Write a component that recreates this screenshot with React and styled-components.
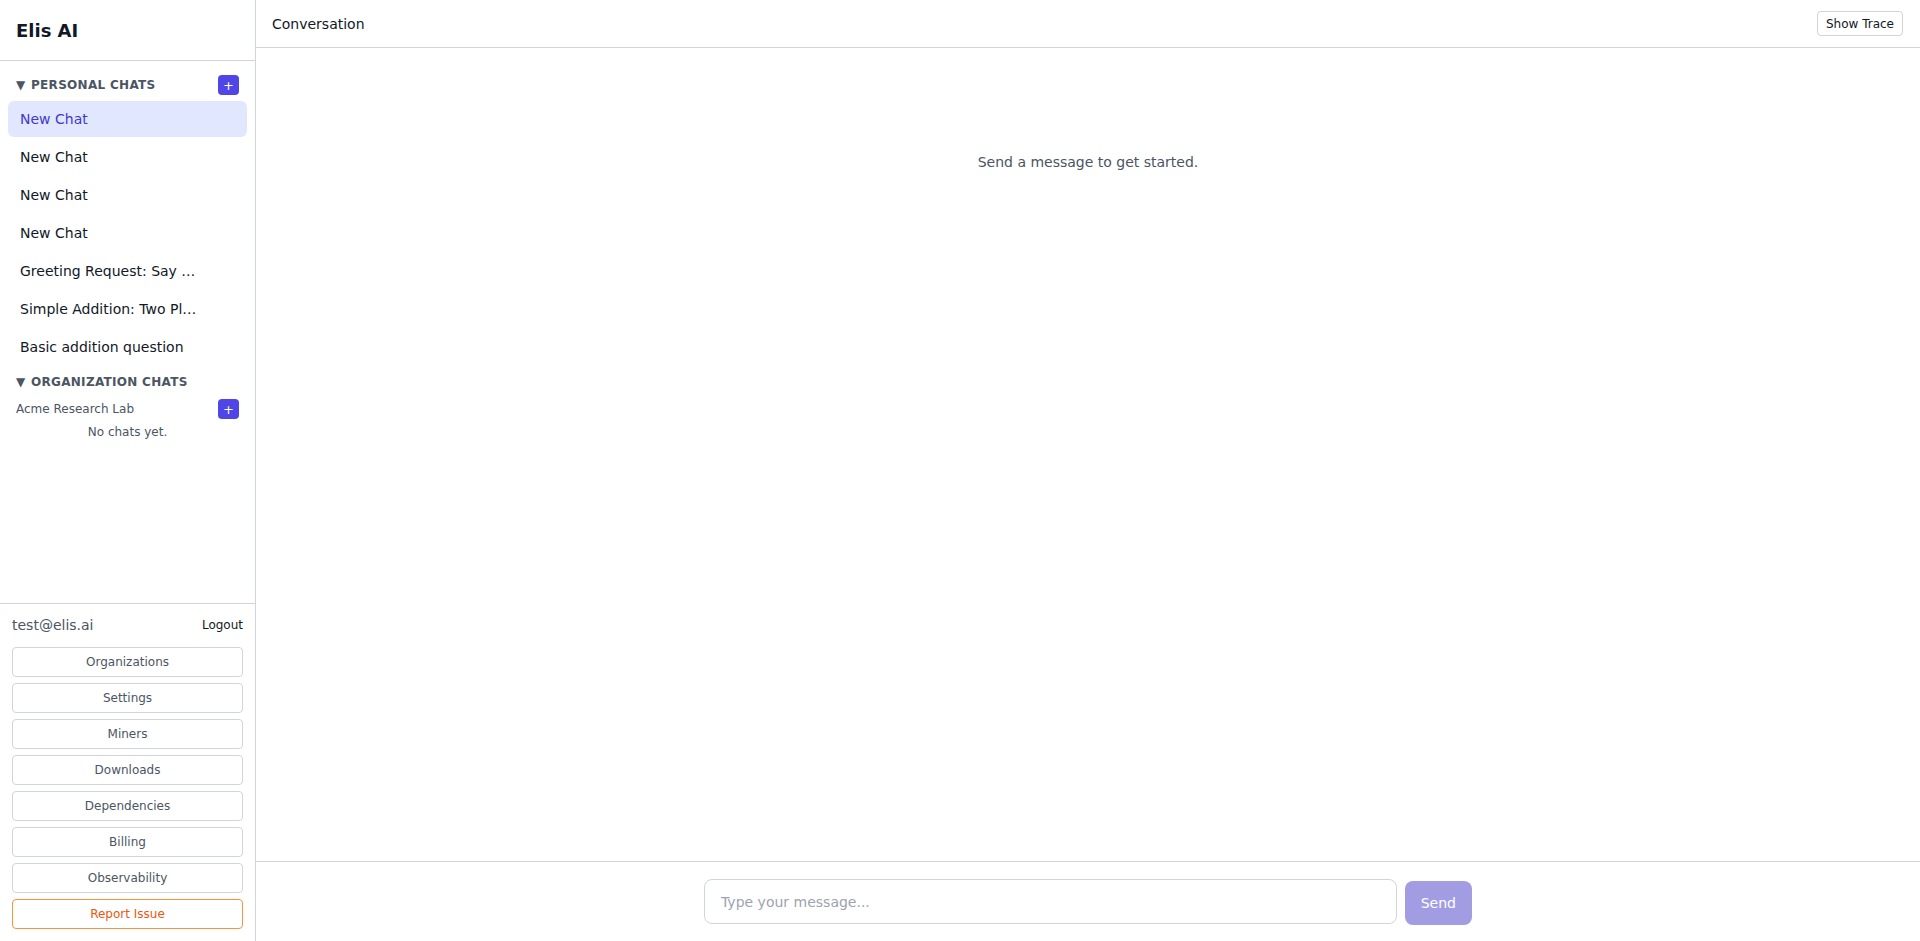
import React from "react";
import styled, { createGlobalStyle } from "styled-components";

const Global = createGlobalStyle`
  html, body { margin: 0; padding: 0; height: 100%; }
  body { font-family: "DejaVu Sans", "Noto Sans", sans-serif; color: #111827; background: #fff; }
  #root { height: 100%; }
  * { box-sizing: border-box; }
`;

const Shell = styled.div`
  display: flex;
  height: 941px;
  width: 100%;
  overflow: hidden;
`;

const Sidebar = styled.aside`
  width: 256px;
  flex-shrink: 0;
  border-right: 1px solid #d1d5db;
  display: flex;
  flex-direction: column;
  background: #fff;
`;

const Brand = styled.div`
  height: 61px;
  border-bottom: 1px solid #d1d5db;
  display: flex;
  align-items: center;
  padding: 0 16px;
  font-size: 18px;
  font-weight: 700;
  color: #111827;
`;

const Nav = styled.nav`
  flex: 1;
  overflow: auto;
  padding: 0 8px;
`;

const SectionHeader = styled.div`
  display: flex;
  align-items: center;
  justify-content: space-between;
  height: 20px;
  margin-top: ${(p) => p.$mt}px;
  padding: 0 8px;
`;

const SectionTitle = styled.div`
  display: flex;
  align-items: center;
  gap: 5px;
  font-size: 12px;
  font-weight: 700;
  letter-spacing: 0.3px;
  text-transform: uppercase;
  color: #4b5563;
`;

const Caret = styled.span`
  font-size: 12px;
  letter-spacing: 0;
  width: 10px;
`;

const PlusButton = styled.button`
  width: 21px;
  height: 20px;
  border: none;
  border-radius: 4px;
  background: #4f46e5;
  color: #fff;
  font-family: inherit;
  font-size: 13px;
  line-height: 1;
  padding: 0;
  display: flex;
  align-items: center;
  justify-content: center;
  cursor: pointer;
`;

const ChatList = styled.ul`
  list-style: none;
  margin: 6px 0 0;
  padding: 0;
  display: flex;
  flex-direction: column;
  gap: 2px;
`;

const ChatItem = styled.li`
  height: 36px;
  display: flex;
  align-items: center;
  padding: 0 12px;
  border-radius: 6px;
  font-size: 14px;
  color: ${(p) => (p.$active ? "#4338ca" : "#111827")};
  background: ${(p) => (p.$active ? "#e0e7ff" : "transparent")};
  white-space: nowrap;
  overflow: hidden;
  cursor: pointer;
`;

const OrgRow = styled.div`
  display: flex;
  align-items: center;
  justify-content: space-between;
  height: 20px;
  margin-top: 7px;
  padding: 0 8px;
  font-size: 12px;
  color: #4b5563;
`;

const EmptyNote = styled.div`
  margin-top: 5px;
  text-align: center;
  font-size: 12px;
  line-height: 16px;
  color: #4b5563;
`;

const Footer = styled.div`
  border-top: 1px solid #d1d5db;
  padding: 11px 12px 12px;
`;

const UserRow = styled.div`
  display: flex;
  align-items: center;
  justify-content: space-between;
  height: 20px;
  margin-bottom: 12px;
`;

const Email = styled.span`
  font-size: 14px;
  color: #4b5563;
`;

const Logout = styled.button`
  border: none;
  background: none;
  padding: 0;
  font-family: inherit;
  font-size: 12px;
  color: #111827;
  cursor: pointer;
`;

const MenuStack = styled.div`
  display: flex;
  flex-direction: column;
  gap: 6px;
`;

const MenuButton = styled.button`
  height: 30px;
  width: 100%;
  border: 1px solid ${(p) => (p.$warn ? "#fb923c" : "#d1d5db")};
  border-radius: 4px;
  background: #fff;
  font-family: inherit;
  font-size: 12px;
  color: ${(p) => (p.$warn ? "#ea580c" : "#4b5563")};
  cursor: pointer;
`;

const Main = styled.main`
  flex: 1;
  display: flex;
  flex-direction: column;
  min-width: 0;
`;

const TopBar = styled.header`
  height: 48px;
  border-bottom: 1px solid #d1d5db;
  display: flex;
  align-items: center;
  justify-content: space-between;
  padding: 0 17px 0 16px;
  font-size: 14px;
  color: #111827;
`;

const TraceButton = styled.button`
  height: 25px;
  padding: 0 8px;
  border: 1px solid #d1d5db;
  border-radius: 4px;
  background: #fff;
  font-family: inherit;
  font-size: 12px;
  color: #111827;
  cursor: pointer;
`;

const Messages = styled.section`
  flex: 1;
  overflow: auto;
  padding: 24px 16px;
`;

const EmptyState = styled.p`
  margin: 80px 0 0;
  text-align: center;
  font-size: 14px;
  line-height: 20px;
  color: #4b5563;
`;

const Composer = styled.div`
  border-top: 1px solid #d1d5db;
  padding: 16px 16px 16px;
`;

const Form = styled.form`
  max-width: 768px;
  margin: 0 auto;
  display: flex;
  align-items: center;
  gap: 8px;
`;

const Input = styled.input`
  flex: 1;
  height: 45px;
  border: 1px solid #d1d5db;
  border-radius: 8px;
  padding: 0 16px;
  font-family: inherit;
  font-size: 14px;
  color: #111827;
  outline: none;
  &::placeholder { color: #9ca3af; }
`;

const SendButton = styled.button`
  height: 44px;
  margin-top: 3px;
  padding: 0 16px;
  border: none;
  border-radius: 8px;
  background: #a29de3;
  color: #fff;
  font-family: inherit;
  font-size: 14px;
  cursor: not-allowed;
`;

const chats = [
  "New Chat",
  "New Chat",
  "New Chat",
  "New Chat",
  "Greeting Request: Say …",
  "Simple Addition: Two Pl…",
  "Basic addition question",
];

const menu = [
  "Organizations",
  "Settings",
  "Miners",
  "Downloads",
  "Dependencies",
  "Billing",
  "Observability",
];

export default function App() {
  return (
    <>
      <Global />
      <Shell>
        <Sidebar>
          <Brand>Elis AI</Brand>
          <Nav>
            <SectionHeader $mt={14}>
              <SectionTitle>
                <Caret>▼</Caret>Personal Chats
              </SectionTitle>
              <PlusButton>+</PlusButton>
            </SectionHeader>
            <ChatList>
              {chats.map((c, i) => (
                <ChatItem key={i} $active={i === 0}>
                  {c}
                </ChatItem>
              ))}
            </ChatList>
            <SectionHeader $mt={7}>
              <SectionTitle>
                <Caret>▼</Caret>Organization Chats
              </SectionTitle>
            </SectionHeader>
            <OrgRow>
              <span>Acme Research Lab</span>
              <PlusButton>+</PlusButton>
            </OrgRow>
            <EmptyNote>No chats yet.</EmptyNote>
          </Nav>
          <Footer>
            <UserRow>
              <Email>test@elis.ai</Email>
              <Logout>Logout</Logout>
            </UserRow>
            <MenuStack>
              {menu.map((m) => (
                <MenuButton key={m}>{m}</MenuButton>
              ))}
              <MenuButton $warn>Report Issue</MenuButton>
            </MenuStack>
          </Footer>
        </Sidebar>
        <Main>
          <TopBar>
            <span>Conversation</span>
            <TraceButton>Show Trace</TraceButton>
          </TopBar>
          <Messages>
            <EmptyState>Send a message to get started.</EmptyState>
          </Messages>
          <Composer>
            <Form onSubmit={(e) => e.preventDefault()}>
              <Input placeholder="Type your message..." />
              <SendButton type="submit" disabled>
                Send
              </SendButton>
            </Form>
          </Composer>
        </Main>
      </Shell>
    </>
  );
}
